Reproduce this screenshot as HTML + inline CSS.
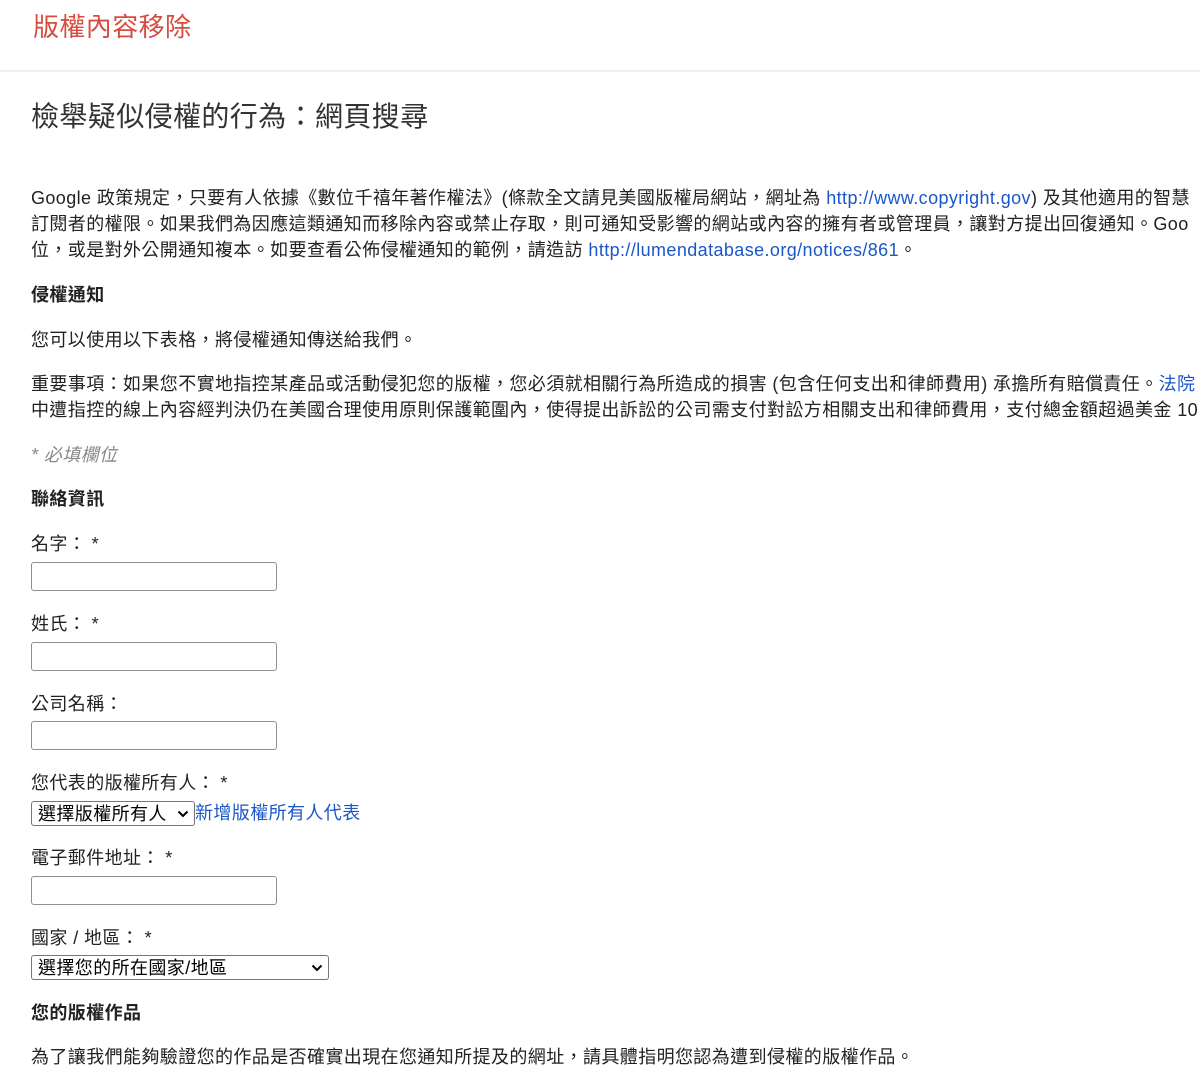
<!DOCTYPE html>
<html><head><meta charset="utf-8"><style>
html,body{margin:0;padding:0;width:1200px;height:1091px;overflow:hidden;background:#fff}
body{font-family:"Liberation Sans","Noto Sans CJK TC",sans-serif;color:#222;font-size:18px;position:relative;letter-spacing:0.4px}
.a{position:absolute;left:31px;white-space:nowrap;line-height:26px}
a{color:#1a57c8;text-decoration:none}
b{font-weight:bold}
.in{position:absolute;left:31px;width:244px;height:27px;border:1px solid #8f8f8f;border-radius:3px;box-sizing:content-box}
.sel{position:absolute;left:31px;border:1px solid #767676;border-radius:3px;height:23px;line-height:23px;font-size:18px;padding-left:6px;box-sizing:border-box;white-space:nowrap;color:#000}
.sel svg{position:absolute;right:5px;top:8px}
</style></head><body>
<div class="a" style="left:33px;top:11px;font-size:26px;line-height:32px;color:#d64d3f">版權內容移除</div>
<div style="position:absolute;left:0;top:70px;width:1200px;height:2px;background:#eeeeee"></div>
<div class="a" style="top:100px;font-size:28px;line-height:34px;color:#333">檢舉疑似侵權的行為：網頁搜尋</div>
<div class="a" style="top:185px">Google 政策規定，只要有人依據《數位千禧年著作權法》(條款全文請見美國版權局網站，網址為 <a>http://www.copyright.gov</a>) 及其他適用的智慧</div>
<div class="a" style="top:211px">訂閱者的權限。如果我們為因應這類通知而移除內容或禁止存取，則可通知受影響的網站或內容的擁有者或管理員，讓對方提出回復通知。Goo</div>
<div class="a" style="top:237px">位，或是對外公開通知複本。如要查看公佈侵權通知的範例，請造訪 <a>http://lumendatabase.org/notices/861</a>。</div>
<div class="a" style="top:282px"><b>侵權通知</b></div>
<div class="a" style="top:327px">您可以使用以下表格，將侵權通知傳送給我們。</div>
<div class="a" style="top:371px">重要事項：如果您不實地指控某產品或活動侵犯您的版權，您必須就相關行為所造成的損害 (包含任何支出和律師費用) 承擔所有賠償責任。<a>法院</a></div>
<div class="a" style="top:397px">中遭指控的線上內容經判決仍在美國合理使用原則保護範圍內，使得提出訴訟的公司需支付對訟方相關支出和律師費用，支付總金額超過美金 10</div>
<div class="a" style="top:442px;font-style:italic;color:#888">* 必填欄位</div>
<div class="a" style="top:486px"><b>聯絡資訊</b></div>
<div class="a" style="top:531px">名字： *</div>
<div class="in" style="top:562px"></div>
<div class="a" style="top:611px">姓氏： *</div>
<div class="in" style="top:642px"></div>
<div class="a" style="top:691px">公司名稱：</div>
<div class="in" style="top:721px"></div>
<div class="a" style="top:770px">您代表的版權所有人： *</div>
<div class="sel" style="top:801px;width:164px;height:25px;line-height:24px">選擇版權所有人<svg width="12" height="8" viewBox="0 0 12 8"><path d="M1.5 1.5 6 6l4.5-4.5" stroke="#000" stroke-width="2" fill="none"/></svg></div>
<div class="a" style="left:195px;top:800px"><a>新增版權所有人代表</a></div>
<div class="a" style="top:845px">電子郵件地址： *</div>
<div class="in" style="top:876px"></div>
<div class="a" style="top:925px">國家 / 地區： *</div>
<div class="sel" style="top:955px;width:298px;height:25px;line-height:24px">選擇您的所在國家/地區<svg width="12" height="8" viewBox="0 0 12 8"><path d="M1.5 1.5 6 6l4.5-4.5" stroke="#000" stroke-width="2" fill="none"/></svg></div>
<div class="a" style="top:1000px"><b>您的版權作品</b></div>
<div class="a" style="top:1044px">為了讓我們能夠驗證您的作品是否確實出現在您通知所提及的網址，請具體指明您認為遭到侵權的版權作品。</div>
</body></html>
